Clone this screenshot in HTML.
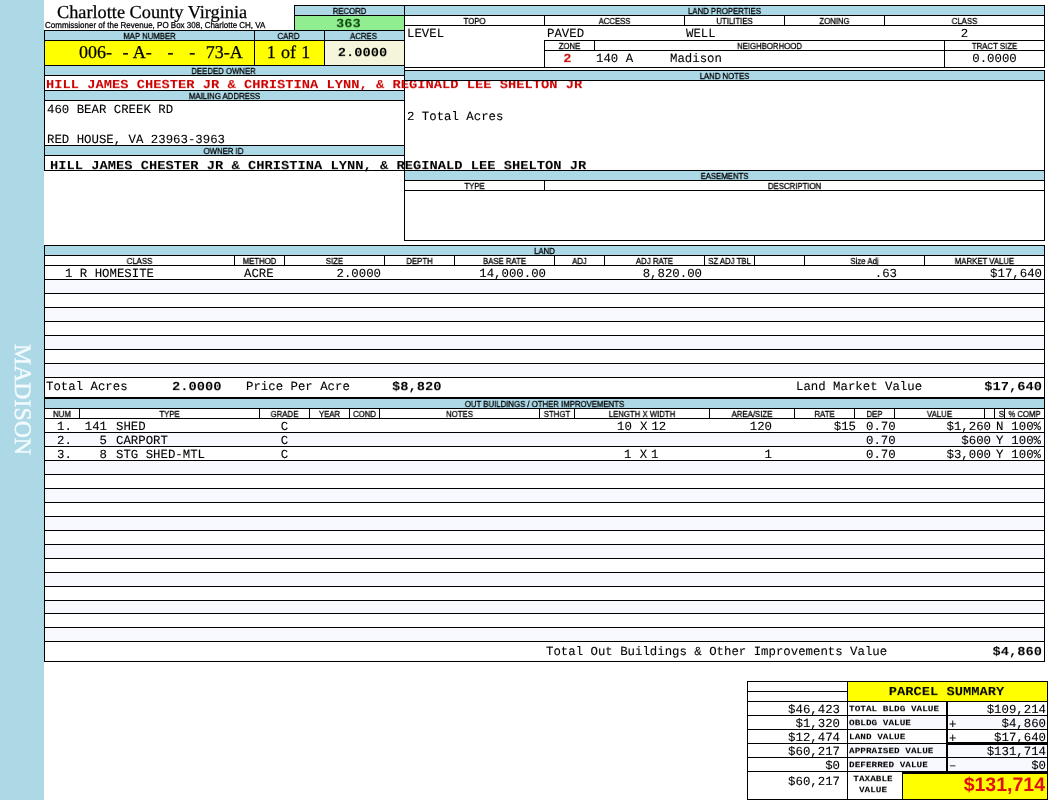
<!DOCTYPE html>
<html lang="en"><head><meta charset="utf-8"><title>Charlotte County Virginia - Property Card</title>
<style>
html,body{margin:0;padding:0;background:#fff;}
body{width:1050px;height:800px;position:relative;overflow:hidden;font-family:"Liberation Sans",sans-serif;}
.r{position:absolute;}
.t{position:absolute;white-space:pre;color:#000;transform-origin:0 0;text-rendering:geometricPrecision;will-change:transform;}
.ac{text-align:center;transform-origin:50% 0;}
.ar{text-align:right;transform-origin:100% 0;}
.lab{font-family:"Liberation Sans",sans-serif;font-size:8.7px;line-height:10px;transform:scale(0.895,1);-webkit-text-stroke:0.3px #000;}
.sub{font-family:"Liberation Sans",sans-serif;font-size:8px;line-height:10px;transform:scale(1,1.08);-webkit-text-stroke:0.25px #000;}
.title{font-family:"Liberation Serif",serif;font-size:18.3px;line-height:22px;-webkit-text-stroke:0.25px #000;}
.map{font-family:"Liberation Serif",serif;font-size:18px;line-height:22px;word-spacing:0.75px;-webkit-text-stroke:0.25px #000;}
.c{font-family:"Liberation Mono",monospace;font-size:12.36px;line-height:14px;-webkit-text-stroke:0.1px #000;}
.cb{font-family:"Liberation Mono",monospace;font-size:13.75px;line-height:16px;font-weight:bold;transform:scale(1,0.915);}
.cs{font-family:"Liberation Mono",monospace;font-size:9.4px;line-height:11px;font-weight:bold;transform:scale(1,0.9);}
.big{font-family:"Liberation Sans",sans-serif;font-size:19.5px;line-height:22px;font-weight:bold;color:#e01010;}
.side{font-family:"Liberation Serif",serif;font-size:23.8px;line-height:24px;color:#f3fafd;-webkit-text-stroke:0.4px #f3fafd;transform:rotate(90deg);transform-origin:0 0;}
</style></head><body>
<div class="r" style="left:0px;top:0px;width:44px;height:800px;background:#add8e6;"></div>
<div class="t side" style="left:34.4px;top:343.8px;">MADISON</div>
<div class="t title" style="left:57.3px;top:1px;">Charlotte County Virginia</div>
<div class="t sub" style="left:45px;top:20.44px;">Commissioner of the Revenue, PO Box 308, Charlotte CH, VA</div>
<div class="r" style="left:295px;top:6px;width:109px;height:9px;background:#add8e6;"></div>
<div class="r" style="left:295px;top:16px;width:109px;height:14px;background:#90ee90;"></div>
<div class="r" style="left:294px;top:5px;width:111px;height:1px;background:#000;"></div>
<div class="r" style="left:294px;top:15px;width:111px;height:1px;background:#000;"></div>
<div class="r" style="left:294px;top:5px;width:1px;height:26px;background:#000;"></div>
<div class="t lab ac" style="left:294.5px;top:6px;width:109px;">RECORD</div>
<div class="t cb ac" style="left:294px;top:17.85px;width:109px;color:#0b470b;">363</div>
<div class="r" style="left:45px;top:31px;width:359px;height:9px;background:#add8e6;"></div>
<div class="r" style="left:45px;top:41px;width:209px;height:24px;background:#ffff00;"></div>
<div class="r" style="left:255px;top:41px;width:69px;height:24px;background:#ffff00;"></div>
<div class="r" style="left:325px;top:41px;width:79px;height:24px;background:#f5f5dc;"></div>
<div class="r" style="left:45px;top:66px;width:359px;height:9px;background:#add8e6;"></div>
<div class="r" style="left:45px;top:91px;width:359px;height:9px;background:#add8e6;"></div>
<div class="r" style="left:45px;top:146px;width:359px;height:9px;background:#add8e6;"></div>
<div class="r" style="left:44px;top:30px;width:361px;height:1px;background:#000;"></div>
<div class="r" style="left:44px;top:40px;width:361px;height:1px;background:#000;"></div>
<div class="r" style="left:44px;top:65px;width:361px;height:1px;background:#000;"></div>
<div class="r" style="left:44px;top:75px;width:361px;height:1px;background:#000;"></div>
<div class="r" style="left:44px;top:90px;width:361px;height:1px;background:#000;"></div>
<div class="r" style="left:44px;top:100px;width:361px;height:1px;background:#000;"></div>
<div class="r" style="left:44px;top:145px;width:361px;height:1px;background:#000;"></div>
<div class="r" style="left:44px;top:155px;width:361px;height:1px;background:#000;"></div>
<div class="r" style="left:44px;top:170px;width:361px;height:1px;background:#000;"></div>
<div class="r" style="left:44px;top:30px;width:1px;height:141px;background:#000;"></div>
<div class="r" style="left:254px;top:30px;width:1px;height:35px;background:#000;"></div>
<div class="r" style="left:324px;top:30px;width:1px;height:35px;background:#000;"></div>
<div class="t lab ac" style="left:44.5px;top:31px;width:209px;">MAP NUMBER</div>
<div class="t lab ac" style="left:253.5px;top:31px;width:69px;">CARD</div>
<div class="t lab ac" style="left:324px;top:31px;width:79px;">ACRES</div>
<div class="t map" style="left:78.5px;top:41px;">006-  - A-   -   -  73-A</div>
<div class="t map ac" style="left:255px;top:41px;width:67px;">1 of 1</div>
<div class="t cb ac" style="left:325px;top:46.85px;width:75px;">2.0000</div>
<div class="t lab ac" style="left:44px;top:66px;width:359px;">DEEDED OWNER</div>
<div class="t lab ac" style="left:44.5px;top:91px;width:359px;">MAILING ADDRESS</div>
<div class="t lab ac" style="left:44px;top:146px;width:359px;">OWNER ID</div>
<div class="t c" style="left:46.5px;top:103px;">460 BEAR CREEK RD</div>
<div class="t c" style="left:46.5px;top:133px;">RED HOUSE, VA 23963-3963</div>
<div class="r" style="left:405px;top:6px;width:639px;height:9px;background:#add8e6;"></div>
<div class="r" style="left:404px;top:5px;width:641px;height:1px;background:#000;"></div>
<div class="r" style="left:404px;top:15px;width:641px;height:1px;background:#000;"></div>
<div class="r" style="left:404px;top:25px;width:641px;height:1px;background:#000;"></div>
<div class="r" style="left:404px;top:67px;width:641px;height:1px;background:#000;"></div>
<div class="r" style="left:544px;top:40px;width:501px;height:1px;background:#000;"></div>
<div class="r" style="left:544px;top:50px;width:501px;height:1px;background:#000;"></div>
<div class="r" style="left:404px;top:5px;width:1px;height:236px;background:#000;"></div>
<div class="r" style="left:1044px;top:5px;width:1px;height:63px;background:#000;"></div>
<div class="r" style="left:544px;top:15px;width:1px;height:10px;background:#000;"></div>
<div class="r" style="left:684px;top:15px;width:1px;height:10px;background:#000;"></div>
<div class="r" style="left:784px;top:15px;width:1px;height:10px;background:#000;"></div>
<div class="r" style="left:884px;top:15px;width:1px;height:10px;background:#000;"></div>
<div class="r" style="left:544px;top:40px;width:1px;height:27px;background:#000;"></div>
<div class="r" style="left:594px;top:40px;width:1px;height:10px;background:#000;"></div>
<div class="r" style="left:944px;top:40px;width:1px;height:27px;background:#000;"></div>
<div class="t lab ac" style="left:404.5px;top:6px;width:639px;">LAND PROPERTIES</div>
<div class="t lab ac" style="left:404.5px;top:16px;width:139px;">TOPO</div>
<div class="t lab ac" style="left:544.5px;top:16px;width:139px;">ACCESS</div>
<div class="t lab ac" style="left:684.5px;top:16px;width:99px;">UTILITIES</div>
<div class="t lab ac" style="left:784.5px;top:16px;width:99px;">ZONING</div>
<div class="t lab ac" style="left:884.5px;top:16px;width:159px;">CLASS</div>
<div class="t c" style="left:406.5px;top:27px;">LEVEL</div>
<div class="t c" style="left:546.5px;top:27px;">PAVED</div>
<div class="t c" style="left:685.5px;top:27px;">WELL</div>
<div class="t c ac" style="left:885px;top:27px;width:159px;">2</div>
<div class="t lab ac" style="left:544.5px;top:41px;width:49px;">ZONE</div>
<div class="t lab ac" style="left:594.5px;top:41px;width:349px;">NEIGHBORHOOD</div>
<div class="t lab ac" style="left:944.5px;top:41px;width:99px;">TRACT SIZE</div>
<div class="t cb ac" style="left:545px;top:52.85px;width:45px;color:#cc0000;">2</div>
<div class="t c" style="left:596px;top:52px;">140 A</div>
<div class="t c" style="left:670px;top:52px;">Madison</div>
<div class="t c ac" style="left:945px;top:52px;width:99px;">0.0000</div>
<div class="t cb" style="left:46px;top:78.85px;color:#cc0000;">HILL JAMES CHESTER JR &amp; CHRISTINA LYNN, &amp; REGINALD LEE SHELTON JR</div>
<div class="r" style="left:405px;top:71px;width:639px;height:9px;background:#add8e6;"></div>
<div class="r" style="left:404px;top:70px;width:641px;height:1px;background:#000;"></div>
<div class="r" style="left:404px;top:80px;width:641px;height:1px;background:#000;"></div>
<div class="r" style="left:1044px;top:70px;width:1px;height:171px;background:#000;"></div>
<div class="t lab ac" style="left:404.5px;top:71px;width:639px;">LAND NOTES</div>
<div class="t c" style="left:406.5px;top:110px;">2 Total Acres</div>
<div class="t cb" style="left:50px;top:159.65px;">HILL JAMES CHESTER JR &amp; CHRISTINA LYNN, &amp; REGINALD LEE SHELTON JR</div>
<div class="r" style="left:405px;top:171px;width:639px;height:9px;background:#add8e6;"></div>
<div class="r" style="left:404px;top:170px;width:641px;height:1px;background:#000;"></div>
<div class="r" style="left:404px;top:180px;width:641px;height:1px;background:#000;"></div>
<div class="r" style="left:404px;top:190px;width:641px;height:1px;background:#000;"></div>
<div class="r" style="left:404px;top:240px;width:641px;height:1px;background:#000;"></div>
<div class="r" style="left:544px;top:180px;width:1px;height:10px;background:#000;"></div>
<div class="t lab ac" style="left:404.5px;top:171px;width:639px;">EASEMENTS</div>
<div class="t lab ac" style="left:404.5px;top:181px;width:139px;">TYPE</div>
<div class="t lab ac" style="left:544.5px;top:181px;width:499px;">DESCRIPTION</div>
<div class="r" style="left:45px;top:246px;width:999px;height:9px;background:#add8e6;"></div>
<div class="r" style="left:44px;top:245px;width:1001px;height:1px;background:#000;"></div>
<div class="r" style="left:44px;top:255px;width:1001px;height:1px;background:#000;"></div>
<div class="r" style="left:44px;top:265px;width:1001px;height:1px;background:#000;"></div>
<div class="r" style="left:45px;top:280px;width:999px;height:13px;background:#f8f8ff;"></div>
<div class="r" style="left:45px;top:308px;width:999px;height:13px;background:#f8f8ff;"></div>
<div class="r" style="left:45px;top:336px;width:999px;height:13px;background:#f8f8ff;"></div>
<div class="r" style="left:45px;top:364px;width:999px;height:13px;background:#f8f8ff;"></div>
<div class="r" style="left:44px;top:279px;width:1001px;height:1px;background:#000;"></div>
<div class="r" style="left:44px;top:293px;width:1001px;height:1px;background:#000;"></div>
<div class="r" style="left:44px;top:307px;width:1001px;height:1px;background:#000;"></div>
<div class="r" style="left:44px;top:321px;width:1001px;height:1px;background:#000;"></div>
<div class="r" style="left:44px;top:335px;width:1001px;height:1px;background:#000;"></div>
<div class="r" style="left:44px;top:349px;width:1001px;height:1px;background:#000;"></div>
<div class="r" style="left:44px;top:363px;width:1001px;height:1px;background:#000;"></div>
<div class="r" style="left:44px;top:377px;width:1001px;height:1px;background:#000;"></div>
<div class="r" style="left:44px;top:397px;width:1001px;height:1px;background:#000;"></div>
<div class="r" style="left:44px;top:245px;width:1px;height:153px;background:#000;"></div>
<div class="r" style="left:1044px;top:245px;width:1px;height:153px;background:#000;"></div>
<div class="r" style="left:234px;top:255px;width:1px;height:10px;background:#000;"></div>
<div class="r" style="left:284px;top:255px;width:1px;height:10px;background:#000;"></div>
<div class="r" style="left:384px;top:255px;width:1px;height:10px;background:#000;"></div>
<div class="r" style="left:454px;top:255px;width:1px;height:10px;background:#000;"></div>
<div class="r" style="left:554px;top:255px;width:1px;height:10px;background:#000;"></div>
<div class="r" style="left:604px;top:255px;width:1px;height:10px;background:#000;"></div>
<div class="r" style="left:704px;top:255px;width:1px;height:10px;background:#000;"></div>
<div class="r" style="left:754px;top:255px;width:1px;height:10px;background:#000;"></div>
<div class="r" style="left:804px;top:255px;width:1px;height:10px;background:#000;"></div>
<div class="r" style="left:924px;top:255px;width:1px;height:10px;background:#000;"></div>
<div class="t lab ac" style="left:44.5px;top:246px;width:999px;">LAND</div>
<div class="t lab ac" style="left:44.5px;top:256px;width:189px;">CLASS</div>
<div class="t lab ac" style="left:234.5px;top:256px;width:49px;">METHOD</div>
<div class="t lab ac" style="left:284.5px;top:256px;width:99px;">SIZE</div>
<div class="t lab ac" style="left:384.5px;top:256px;width:69px;">DEPTH</div>
<div class="t lab ac" style="left:454.5px;top:256px;width:99px;">BASE RATE</div>
<div class="t lab ac" style="left:554.5px;top:256px;width:49px;">ADJ</div>
<div class="t lab ac" style="left:604.5px;top:256px;width:99px;">ADJ RATE</div>
<div class="t lab ac" style="left:704.5px;top:256px;width:49px;">SZ ADJ TBL</div>
<div class="t lab ac" style="left:804.5px;top:256px;width:119px;">Size Adj</div>
<div class="t lab ac" style="left:924.5px;top:256px;width:119px;">MARKET VALUE</div>
<div class="t c" style="left:65px;top:267px;">1 R HOMESITE</div>
<div class="t c" style="left:244px;top:267px;">ACRE</div>
<div class="t c ar" style="left:81px;top:267px;width:300px;">2.0000</div>
<div class="t c ar" style="left:246px;top:267px;width:300px;">14,000.00</div>
<div class="t c ar" style="left:402px;top:267px;width:300px;">8,820.00</div>
<div class="t c ar" style="left:597px;top:267px;width:300px;">.63</div>
<div class="t c ar" style="left:742px;top:267px;width:300px;">$17,640</div>
<div class="t c" style="left:46px;top:380px;">Total Acres</div>
<div class="t cb" style="left:172px;top:380.85px;">2.0000</div>
<div class="t c" style="left:246px;top:380px;">Price Per Acre</div>
<div class="t cb" style="left:392px;top:380.85px;">$8,820</div>
<div class="t c" style="left:796px;top:380px;">Land Market Value</div>
<div class="t cb ar" style="left:742px;top:380.85px;width:300px;">$17,640</div>
<div class="r" style="left:45px;top:399px;width:999px;height:9px;background:#add8e6;"></div>
<div class="r" style="left:44px;top:398px;width:1001px;height:1px;background:#000;"></div>
<div class="r" style="left:44px;top:408px;width:1001px;height:1px;background:#000;"></div>
<div class="r" style="left:44px;top:418px;width:1001px;height:1px;background:#000;"></div>
<div class="r" style="left:45px;top:433px;width:999px;height:13px;background:#f8f8ff;"></div>
<div class="r" style="left:45px;top:461px;width:999px;height:13px;background:#f8f8ff;"></div>
<div class="r" style="left:45px;top:489px;width:999px;height:13px;background:#f8f8ff;"></div>
<div class="r" style="left:45px;top:517px;width:999px;height:13px;background:#f8f8ff;"></div>
<div class="r" style="left:45px;top:545px;width:999px;height:13px;background:#f8f8ff;"></div>
<div class="r" style="left:45px;top:573px;width:999px;height:13px;background:#f8f8ff;"></div>
<div class="r" style="left:45px;top:601px;width:999px;height:12px;background:#f8f8ff;"></div>
<div class="r" style="left:45px;top:628px;width:999px;height:13px;background:#f8f8ff;"></div>
<div class="r" style="left:44px;top:432px;width:1001px;height:1px;background:#000;"></div>
<div class="r" style="left:44px;top:446px;width:1001px;height:1px;background:#000;"></div>
<div class="r" style="left:44px;top:460px;width:1001px;height:1px;background:#000;"></div>
<div class="r" style="left:44px;top:474px;width:1001px;height:1px;background:#000;"></div>
<div class="r" style="left:44px;top:488px;width:1001px;height:1px;background:#000;"></div>
<div class="r" style="left:44px;top:502px;width:1001px;height:1px;background:#000;"></div>
<div class="r" style="left:44px;top:516px;width:1001px;height:1px;background:#000;"></div>
<div class="r" style="left:44px;top:530px;width:1001px;height:1px;background:#000;"></div>
<div class="r" style="left:44px;top:544px;width:1001px;height:1px;background:#000;"></div>
<div class="r" style="left:44px;top:558px;width:1001px;height:1px;background:#000;"></div>
<div class="r" style="left:44px;top:572px;width:1001px;height:1px;background:#000;"></div>
<div class="r" style="left:44px;top:586px;width:1001px;height:1px;background:#000;"></div>
<div class="r" style="left:44px;top:600px;width:1001px;height:1px;background:#000;"></div>
<div class="r" style="left:44px;top:613px;width:1001px;height:1px;background:#000;"></div>
<div class="r" style="left:44px;top:627px;width:1001px;height:1px;background:#000;"></div>
<div class="r" style="left:44px;top:641px;width:1001px;height:1px;background:#000;"></div>
<div class="r" style="left:44px;top:661px;width:1001px;height:1px;background:#000;"></div>
<div class="r" style="left:44px;top:398px;width:1px;height:264px;background:#000;"></div>
<div class="r" style="left:1044px;top:398px;width:1px;height:264px;background:#000;"></div>
<div class="r" style="left:79px;top:408px;width:1px;height:10px;background:#000;"></div>
<div class="r" style="left:259px;top:408px;width:1px;height:10px;background:#000;"></div>
<div class="r" style="left:309px;top:408px;width:1px;height:10px;background:#000;"></div>
<div class="r" style="left:349px;top:408px;width:1px;height:10px;background:#000;"></div>
<div class="r" style="left:379px;top:408px;width:1px;height:10px;background:#000;"></div>
<div class="r" style="left:539px;top:408px;width:1px;height:10px;background:#000;"></div>
<div class="r" style="left:574px;top:408px;width:1px;height:10px;background:#000;"></div>
<div class="r" style="left:709px;top:408px;width:1px;height:10px;background:#000;"></div>
<div class="r" style="left:794px;top:408px;width:1px;height:10px;background:#000;"></div>
<div class="r" style="left:854px;top:408px;width:1px;height:10px;background:#000;"></div>
<div class="r" style="left:894px;top:408px;width:1px;height:10px;background:#000;"></div>
<div class="r" style="left:984px;top:408px;width:1px;height:10px;background:#000;"></div>
<div class="r" style="left:994px;top:408px;width:1px;height:10px;background:#000;"></div>
<div class="r" style="left:1004px;top:408px;width:1px;height:10px;background:#000;"></div>
<div class="t lab ac" style="left:44.5px;top:399px;width:999px;">OUT BUILDINGS / OTHER IMPROVEMENTS</div>
<div class="t lab ac" style="left:44.5px;top:409px;width:34px;">NUM</div>
<div class="t lab ac" style="left:79.5px;top:409px;width:179px;">TYPE</div>
<div class="t lab ac" style="left:259.5px;top:409px;width:49px;">GRADE</div>
<div class="t lab ac" style="left:309.5px;top:409px;width:39px;">YEAR</div>
<div class="t lab ac" style="left:349.5px;top:409px;width:29px;">COND</div>
<div class="t lab ac" style="left:379.5px;top:409px;width:159px;">NOTES</div>
<div class="t lab ac" style="left:539.5px;top:409px;width:34px;">STHGT</div>
<div class="t lab ac" style="left:574.5px;top:409px;width:134px;">LENGTH X WIDTH</div>
<div class="t lab ac" style="left:709.5px;top:409px;width:84px;">AREA/SIZE</div>
<div class="t lab ac" style="left:794.5px;top:409px;width:59px;">RATE</div>
<div class="t lab ac" style="left:854.5px;top:409px;width:39px;">DEP</div>
<div class="t lab ac" style="left:894.5px;top:409px;width:89px;">VALUE</div>
<div class="t lab ac" style="left:997px;top:409px;width:9px;">S</div>
<div class="t lab ac" style="left:1004.5px;top:409px;width:39px;">% COMP</div>
<div class="t c" style="left:57px;top:420px;">1.</div>
<div class="t c ar" style="left:-193px;top:420px;width:300px;">141</div>
<div class="t c" style="left:116px;top:420px;">SHED</div>
<div class="t c ac" style="left:260px;top:420px;width:49px;">C</div>
<div class="t c" style="left:616.67px;top:420px;">10<span style="letter-spacing:0.8px"> </span>X<span style="letter-spacing:-3.5px"> </span>12</div>
<div class="t c ar" style="left:472px;top:420px;width:300px;">120</div>
<div class="t c ar" style="left:555.7px;top:420px;width:300px;">$15</div>
<div class="t c" style="left:866px;top:420px;">0.70</div>
<div class="t c ar" style="left:691px;top:420px;width:300px;">$1,260</div>
<div class="t c" style="left:996px;top:420px;">N</div>
<div class="t c ar" style="left:741px;top:420px;width:300px;">100%</div>
<div class="t c" style="left:57px;top:434px;">2.</div>
<div class="t c ar" style="left:-193px;top:434px;width:300px;">5</div>
<div class="t c" style="left:116px;top:434px;">CARPORT</div>
<div class="t c ac" style="left:260px;top:434px;width:49px;">C</div>
<div class="t c" style="left:866px;top:434px;">0.70</div>
<div class="t c ar" style="left:691px;top:434px;width:300px;">$600</div>
<div class="t c" style="left:996px;top:434px;">Y</div>
<div class="t c ar" style="left:741px;top:434px;width:300px;">100%</div>
<div class="t c" style="left:57px;top:448px;">3.</div>
<div class="t c ar" style="left:-193px;top:448px;width:300px;">8</div>
<div class="t c" style="left:116px;top:448px;">STG SHED-MTL</div>
<div class="t c ac" style="left:260px;top:448px;width:49px;">C</div>
<div class="t c" style="left:624.08px;top:448px;">1<span style="letter-spacing:0.8px"> </span>X<span style="letter-spacing:-3.5px"> </span>1</div>
<div class="t c ar" style="left:472px;top:448px;width:300px;">1</div>
<div class="t c" style="left:866px;top:448px;">0.70</div>
<div class="t c ar" style="left:691px;top:448px;width:300px;">$3,000</div>
<div class="t c" style="left:996px;top:448px;">Y</div>
<div class="t c ar" style="left:741px;top:448px;width:300px;">100%</div>
<div class="t c" style="left:546px;top:645px;">Total Out Buildings &amp; Other Improvements Value</div>
<div class="t cb ar" style="left:741.5px;top:645.85px;width:300px;">$4,860</div>
<div class="r" style="left:848px;top:682px;width:199px;height:19px;background:#ffff00;"></div>
<div class="r" style="left:848px;top:716px;width:98px;height:13px;background:#f8f8ff;"></div>
<div class="r" style="left:948px;top:716px;width:99px;height:13px;background:#f8f8ff;"></div>
<div class="r" style="left:848px;top:744px;width:98px;height:13px;background:#f8f8ff;"></div>
<div class="r" style="left:948px;top:744px;width:99px;height:13px;background:#f8f8ff;"></div>
<div class="r" style="left:848px;top:758px;width:98px;height:13px;background:#f8f8ff;"></div>
<div class="r" style="left:948px;top:758px;width:99px;height:13px;background:#f8f8ff;"></div>
<div class="r" style="left:903px;top:772px;width:144px;height:27px;background:#ffff00;"></div>
<div class="r" style="left:747px;top:681px;width:301px;height:1px;background:#000;"></div>
<div class="r" style="left:747px;top:691px;width:100px;height:1px;background:#000;"></div>
<div class="r" style="left:747px;top:701px;width:301px;height:1px;background:#000;"></div>
<div class="r" style="left:747px;top:715px;width:301px;height:1px;background:#000;"></div>
<div class="r" style="left:747px;top:729px;width:301px;height:1px;background:#000;"></div>
<div class="r" style="left:747px;top:743px;width:301px;height:1px;background:#000;"></div>
<div class="r" style="left:747px;top:757px;width:301px;height:1px;background:#000;"></div>
<div class="r" style="left:747px;top:771px;width:301px;height:1px;background:#000;"></div>
<div class="r" style="left:747px;top:799px;width:301px;height:1px;background:#000;"></div>
<div class="r" style="left:747px;top:681px;width:1px;height:119px;background:#000;"></div>
<div class="r" style="left:847px;top:681px;width:1px;height:119px;background:#000;"></div>
<div class="r" style="left:1047px;top:681px;width:1px;height:119px;background:#000;"></div>
<div class="r" style="left:946px;top:701px;width:2px;height:71px;background:#000;"></div>
<div class="r" style="left:948px;top:742px;width:99px;height:3px;background:#000;"></div>
<div class="r" style="left:902px;top:771px;width:145px;height:3px;background:#000;"></div>
<div class="r" style="left:902px;top:771px;width:1px;height:29px;background:#000;"></div>
<div class="t cb ac" style="left:847.3px;top:685.85px;width:199px;">PARCEL SUMMARY</div>
<div class="t c ar" style="left:540px;top:702.8px;width:300px;">$46,423</div>
<div class="t cs" style="left:849px;top:703.6px;">TOTAL BLDG VALUE</div>
<div class="t c ar" style="left:746px;top:702.8px;width:300px;">$109,214</div>
<div class="t c ar" style="left:540px;top:716.8px;width:300px;">$1,320</div>
<div class="t cs" style="left:849px;top:717.6px;">OBLDG VALUE</div>
<div class="t c ar" style="left:746px;top:716.8px;width:300px;">$4,860</div>
<div class="t c" style="left:949px;top:717.8px;">+</div>
<div class="t c ar" style="left:540px;top:730.8px;width:300px;">$12,474</div>
<div class="t cs" style="left:849px;top:731.6px;">LAND VALUE</div>
<div class="t c ar" style="left:746px;top:730.8px;width:300px;">$17,640</div>
<div class="t c" style="left:949px;top:731.8px;">+</div>
<div class="t c ar" style="left:540px;top:744.8px;width:300px;">$60,217</div>
<div class="t cs" style="left:849px;top:745.6px;">APPRAISED VALUE</div>
<div class="t c ar" style="left:746px;top:744.8px;width:300px;">$131,714</div>
<div class="t c ar" style="left:540px;top:758.8px;width:300px;">$0</div>
<div class="t cs" style="left:849px;top:759.6px;">DEFERRED VALUE</div>
<div class="t c ar" style="left:746px;top:758.8px;width:300px;">$0</div>
<div class="t c" style="left:949px;top:758.8px;">–</div>
<div class="t c ar" style="left:540px;top:775px;width:300px;">$60,217</div>
<div class="t cs ac" style="left:846.4px;top:774.3px;width:54px;">TAXABLE</div>
<div class="t cs ac" style="left:846.4px;top:784.5px;width:54px;">VALUE</div>
<div class="t big ar" style="left:745.4px;top:774px;width:300px;">$131,714</div>
</body></html>
